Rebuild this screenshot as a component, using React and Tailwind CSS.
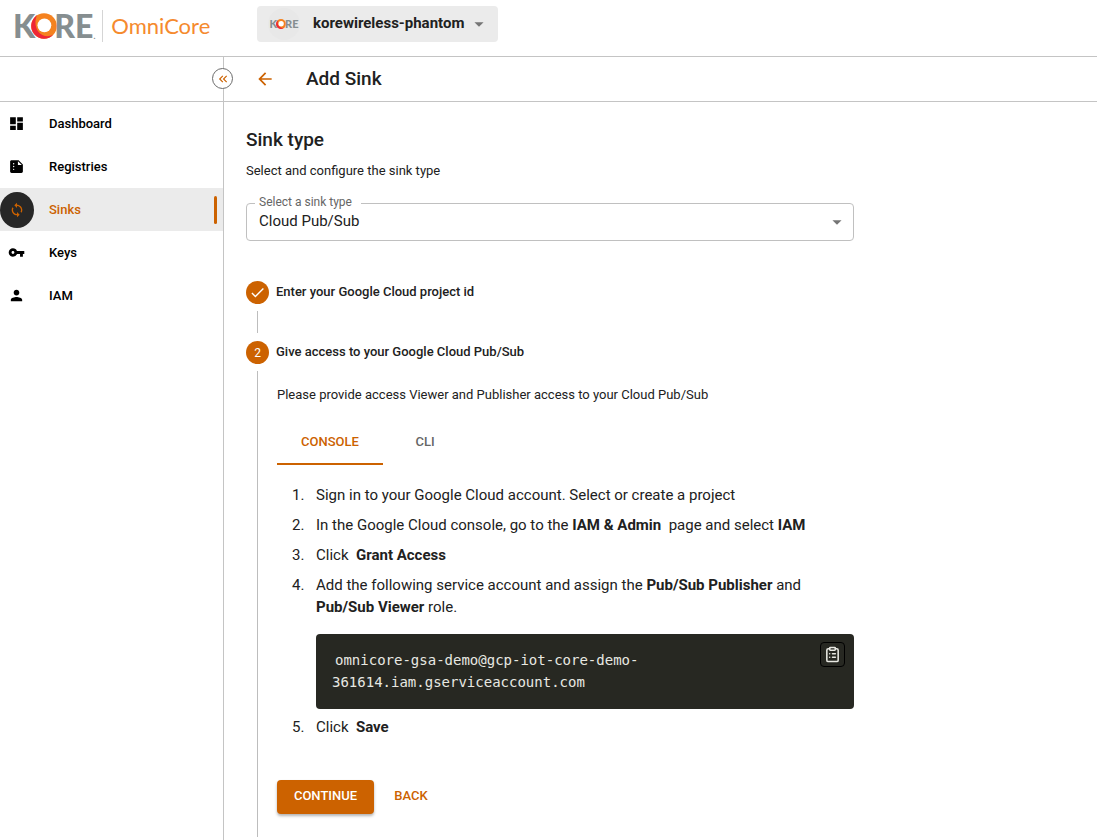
import { useState } from "react";
import { ClipboardList } from "lucide-react";
import {
  MdArrowBack,
  MdArrowDropDown,
  MdCheck,
  MdDashboard,
  MdKeyboardDoubleArrowLeft,
  MdPerson,
  MdSummarize,
  MdSync,
  MdVpnKey,
} from "react-icons/md";

const NAV = [
  { label: "Dashboard", Icon: MdDashboard },
  { label: "Registries", Icon: MdSummarize },
  { label: "Sinks", Icon: MdSync, active: true },
  { label: "Keys", Icon: MdVpnKey },
  { label: "IAM", Icon: MdPerson },
];

function Ring({ className }) {
  return (
    <svg viewBox="0 0 26 26" className={className} aria-hidden="true">
      <circle cx="13" cy="13" r="12.8" fill="#f5821f" />
      <path
        d="M6 2.300A12.800 12.800 0 1 0 22.500 21.600C17 25 10.500 23 7.200 18.500C4 14 3.600 7.500 6 2.300Z"
        fill="#ee2737"
      />
      <circle cx="13.400" cy="12.300" r="6.900" fill="#fff" />
    </svg>
  );
}

function Logo() {
  return (
    <a href="#home" className="flex items-center" aria-label="KORE OmniCore">
      <span className="flex items-center font-['Lato'] text-[32px] leading-8 font-black text-[#868e90]">
        K
        <Ring className="-mx-1 size-[26px]" />
        <span className="ml-px">RE</span>
        <span className="self-end text-[8px] leading-3">.</span>
      </span>
      <span className="ml-[7px] h-8 w-px bg-[#d5d5d5]" />
      <span className="ml-2 font-['Lato'] text-[22px] leading-8 text-[#f58a2e]">OmniCore</span>
    </a>
  );
}

function Sidebar() {
  return (
    <aside className="w-56 shrink-0 border-r border-[#c4c4c4]">
      <div className="relative h-[45px] border-b border-[#c4c4c4]">
        <button
          type="button"
          aria-label="Collapse menu"
          className="absolute top-[11px] -right-2.5 z-10 flex size-[21px] items-center justify-center rounded-full border border-[#6b6b6b] bg-white text-[#cc6200]"
        >
          <MdKeyboardDoubleArrowLeft className="size-[14px]" />
        </button>
      </div>
      <nav>
        {NAV.map(({ label, Icon, active }) => (
          <a
            key={label}
            href={"#" + label.toLowerCase()}
            aria-current={active ? "page" : undefined}
            className={
              "flex h-[43px] items-center text-[13px] font-medium " +
              (active ? "bg-[#ebebeb] text-[#cc6200]" : "text-black")
            }
          >
            <span
              className={
                "flex h-9 w-[34px] items-center justify-center rounded-[50%] pr-px " +
                (active ? "bg-[#272727]" : "")
              }
            >
              <Icon className={active ? "size-4" : "size-[17px]"} />
            </span>
            <span className="ml-[15px] grow">{label}</span>
            {active && <span className="mr-1.5 h-7 w-[3px] rounded-sm bg-[#cc6200]" />}
          </a>
        ))}
      </nav>
    </aside>
  );
}

function StepHeader({ children, label }) {
  return (
    <div className="flex h-[23px] items-start gap-[7px]">
      <span className="flex size-[23px] shrink-0 items-center justify-center rounded-full bg-[#cc6200] text-xs text-white">
        {children}
      </span>
      <h3 className="text-[13px] leading-[22px] font-medium">{label}</h3>
    </div>
  );
}

function Item({ n, children }) {
  return (
    <li className="flex py-1">
      <span className="w-[39px] shrink-0 pl-[15px]">{n}.</span>
      <div className="grow">{children}</div>
    </li>
  );
}

function ConsoleGuide() {
  return (
    <ol className="mt-[15px] text-[15px] leading-[22px]">
      <Item n={1}>Sign in to your Google Cloud account. Select or create a project</Item>
      <Item n={2}>
        In the Google Cloud console, go to the <b>IAM &amp; Admin</b>&nbsp; page and select <b>IAM</b>
      </Item>
      <Item n={3}>
        Click&nbsp; <b>Grant Access</b>
      </Item>
      <Item n={4}>
        Add the following service account and assign the <b>Pub/Sub Publisher</b> and
        <br />
        <b>Pub/Sub Viewer</b> role.
        <div className="relative mt-4 -mb-px rounded-[4px] bg-[#272822] pt-[15px] pr-8 pb-4 pl-4 text-[#e8e8e2]">
          <code className="block indent-[3px] font-['DejaVu_Sans_Mono',monospace] text-[14px] leading-[22px]">
            omnicore-gsa-demo@gcp-iot-core-demo-361614.iam.gserviceaccount.com
          </code>
          <button
            type="button"
            aria-label="Copy"
            className="absolute top-2 right-[9px] flex size-[25px] items-center justify-center rounded-[4px] border border-black"
          >
            <ClipboardList className="size-[17px]" strokeWidth={2.2} />
          </button>
        </div>
      </Item>
      <Item n={5}>
        Click&nbsp; <b>Save</b>
      </Item>
    </ol>
  );
}

export default function App() {
  const [tab, setTab] = useState("console");
  return (
    <div className="flex min-h-screen flex-col bg-white font-['Roboto',sans-serif] text-[#212121]">
      <header className="flex h-[57px] items-start border-b border-[#c4c4c4] pl-[13px]">
        <div className="flex h-[51px] w-[244px] items-center">
          <Logo />
        </div>
        <button
          type="button"
          className="mt-1.5 flex h-9 items-center rounded-[4px] bg-[#ebebeb] pr-2 pl-[11px] text-[15px] font-bold"
        >
          <span className="flex size-8 items-center justify-center rounded-full bg-[#e8e8e8] font-['Lato'] text-[11px] font-black text-[#868e90]">
            K
            <Ring className="-mx-px size-[10px]" />
            RE
          </span>
          <span className="ml-[13px] pb-0.5">korewireless-phantom</span>
          <MdArrowDropDown className="ml-1 size-[22px] text-[#757575]" />
        </button>
      </header>

      <div className="flex grow">
        <Sidebar />
        <div className="flex grow flex-col">
          <div className="flex h-[45px] items-center border-b border-[#c4c4c4] pl-[31px]">
            <button type="button" aria-label="Back" className="text-[#cc6200]">
              <MdArrowBack className="size-5" />
            </button>
            <h1 className="ml-[31px] text-[19px] font-medium">Add Sink</h1>
          </div>

          <main className="w-full max-w-[652px] px-[22px] pt-6">
            <h2 className="text-[19px] leading-7 font-medium">Sink type</h2>
            <p className="mt-[7px] text-[13px] leading-5">Select and configure the sink type</p>

            <div className="relative mt-[22px]">
              <label
                htmlFor="sink-type"
                className="absolute -top-[9px] left-[9px] w-[106px] bg-white pl-1 text-[12px] leading-4 text-[#666]"
              >
                Select a sink type
              </label>
              <select
                id="sink-type"
                className="block h-[38px] w-full appearance-none rounded-[4px] border border-[#c0c0c0] bg-white pr-8 pb-0.5 pl-3 text-[15px]"
              >
                <option>Cloud Pub/Sub</option>
              </select>
              <MdArrowDropDown className="pointer-events-none absolute top-2 right-1.5 size-[22px] text-[#757575]" />
            </div>

            <ol className="mt-10">
              <li>
                <StepHeader label="Enter your Google Cloud project id">
                  <MdCheck className="size-[17px]" />
                </StepHeader>
                <div className="mt-[7px] mb-2 ml-[11px] h-[22px] border-l border-[#bdbdbd]" />
              </li>
              <li>
                <StepHeader label="Give access to your Google Cloud Pub/Sub">2</StepHeader>
                <div className="mt-[7px] mb-[3px] ml-[11px] border-l border-[#bdbdbd] pt-3.5 pb-[23px] pl-[19px]">
                  <p className="text-[13px] leading-5">
                    Please provide access Viewer and Publisher access to your Cloud Pub/Sub
                  </p>
                  <div role="tablist" className="mt-[15px] flex text-[13px] font-medium">
                    <button
                      type="button"
                      role="tab"
                      aria-selected={tab === "console"}
                      onClick={() => setTab("console")}
                      className={
                        "h-[45px] w-[106px] border-b-2 " +
                        (tab === "console" ? "border-[#cc6200] text-[#cc6200]" : "border-transparent text-[#666]")
                      }
                    >
                      CONSOLE
                    </button>
                    <button
                      type="button"
                      role="tab"
                      aria-selected={tab === "cli"}
                      onClick={() => setTab("cli")}
                      className={
                        "h-[45px] w-[84px] border-b-2 " +
                        (tab === "cli" ? "border-[#cc6200] text-[#cc6200]" : "border-transparent text-[#666]")
                      }
                    >
                      CLI
                    </button>
                  </div>
                  <ConsoleGuide />
                  <div className="mt-[38px] flex items-center text-[13px] font-medium">
                    <button
                      type="button"
                      className="h-[34px] w-[97px] rounded-[4px] bg-[#cc6200] pb-0.5 text-white shadow-[0_2px_3px_rgba(0,0,0,0.3)]"
                    >
                      CONTINUE
                    </button>
                    <button type="button" className="h-[34px] w-[74px] pb-0.5 text-[#cc6200]">
                      BACK
                    </button>
                  </div>
                </div>
              </li>
            </ol>
          </main>
        </div>
      </div>
    </div>
  );
}
